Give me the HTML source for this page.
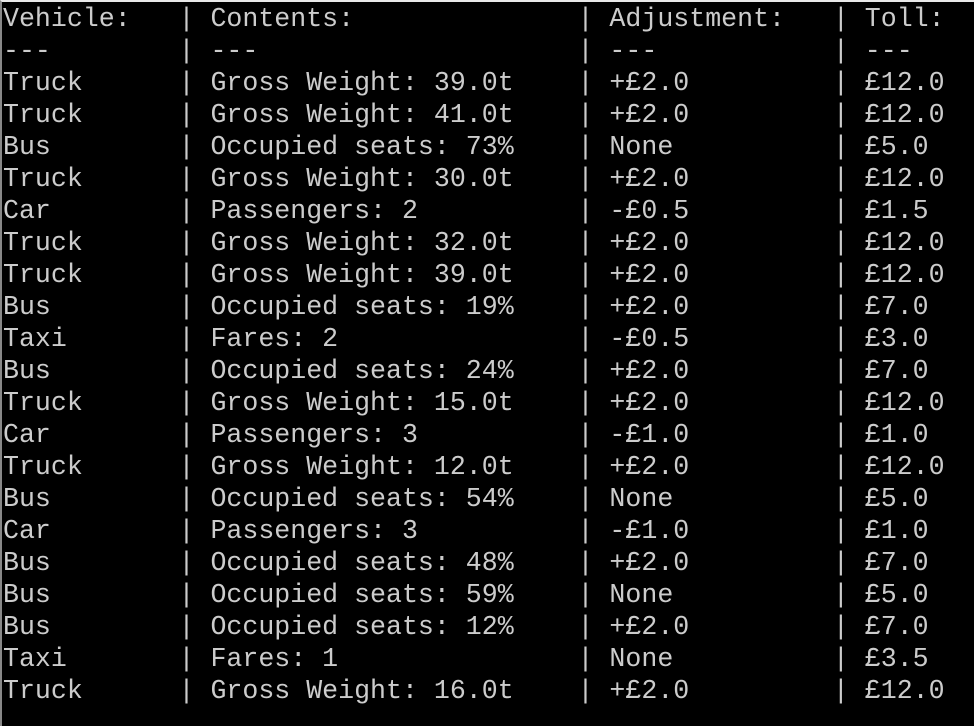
<!DOCTYPE html>
<html><head><style>
html,body{margin:0;padding:0;background:#000;width:974px;height:726px;overflow:hidden}
body{border-top:2px solid #e8e8e8;border-left:2px solid #888;box-sizing:border-box}
pre{margin:0;padding:1px 0 0 1px;font-family:"Liberation Mono",monospace;font-size:26.6px;line-height:32px;color:#cccccc;white-space:pre}
</style></head><body><pre>Vehicle:   | Contents:              | Adjustment:   | Toll:
---        | ---                    | ---           | ---
Truck      | Gross Weight: 39.0t    | +£2.0         | £12.0
Truck      | Gross Weight: 41.0t    | +£2.0         | £12.0
Bus        | Occupied seats: 73%    | None          | £5.0
Truck      | Gross Weight: 30.0t    | +£2.0         | £12.0
Car        | Passengers: 2          | -£0.5         | £1.5
Truck      | Gross Weight: 32.0t    | +£2.0         | £12.0
Truck      | Gross Weight: 39.0t    | +£2.0         | £12.0
Bus        | Occupied seats: 19%    | +£2.0         | £7.0
Taxi       | Fares: 2               | -£0.5         | £3.0
Bus        | Occupied seats: 24%    | +£2.0         | £7.0
Truck      | Gross Weight: 15.0t    | +£2.0         | £12.0
Car        | Passengers: 3          | -£1.0         | £1.0
Truck      | Gross Weight: 12.0t    | +£2.0         | £12.0
Bus        | Occupied seats: 54%    | None          | £5.0
Car        | Passengers: 3          | -£1.0         | £1.0
Bus        | Occupied seats: 48%    | +£2.0         | £7.0
Bus        | Occupied seats: 59%    | None          | £5.0
Bus        | Occupied seats: 12%    | +£2.0         | £7.0
Taxi       | Fares: 1               | None          | £3.5
Truck      | Gross Weight: 16.0t    | +£2.0         | £12.0</pre></body></html>
